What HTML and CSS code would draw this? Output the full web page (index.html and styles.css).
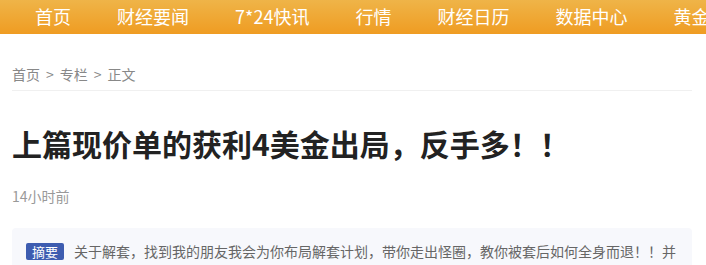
FILE: index.html
```html
<!DOCTYPE html>
<html lang="zh-CN">
<head>
<meta charset="utf-8">
<title>上篇现价单的获利4美金出局，反手多！！</title>
<link rel="stylesheet" href="styles.css">
</head>
<body>
<nav class="topnav">
  <a class="nav-item">首页</a>
  <a class="nav-item">财经要闻</a>
  <a class="nav-item">7*24快讯</a>
  <a class="nav-item">行情</a>
  <a class="nav-item">财经日历</a>
  <a class="nav-item">数据中心</a>
  <a class="nav-item">黄金</a>
  <a class="nav-item">外汇</a>
</nav>
<main class="content">
  <div class="crumbs">
    <a>首页</a><span class="sep">&gt;</span><a>专栏</a><span class="sep">&gt;</span><span>正文</span>
  </div>
  <h1 class="title">上篇现价单的获利4美金出局，反手多！！</h1>
  <div class="meta">14小时前</div>
  <div class="summary">
    <span class="badge">摘要</span>
    <span class="summary-text">关于解套，找到我的朋友我会为你布局解套计划，带你走出怪圈，教你被套后如何全身而退！！并</span>
  </div>
</main>
</body>
</html>
```
FILE: styles.css
```css
html, body {
  margin: 0;
  padding: 0;
  background: #fff;
  overflow: hidden;
}
body {
  font-family: "Noto Sans CJK SC", "Noto Sans", sans-serif;
}
.topnav {
  height: 34px;
  display: flex;
  align-items: center;
  padding-left: 12px;
  background: linear-gradient(to bottom, #efb448, #ef9c22);
  white-space: nowrap;
  overflow: hidden;
}
.nav-item {
  flex: none;
  color: #fff;
  font-size: 18px;
  line-height: 30px;
  padding: 0 23px;
  margin-top: -2px;
}
.content {
  width: 680px;
  margin-left: 12px;
}
.crumbs {
  font-size: 14px;
  color: #888;
  line-height: 20px;
  padding-top: 30px;
  padding-bottom: 6px;
  border-bottom: 1px solid #f0f0f0;
}
.crumbs .sep {
  margin: 0 6px;
}
.title {
  margin: 0;
  padding-top: 30px;
  font-size: 30px;
  line-height: 44px;
  font-weight: bold;
  color: #222;
}
.meta {
  margin-top: 21px;
  font-size: 14px;
  line-height: 20px;
  color: #999;
}
.summary {
  margin-top: 22px;
  background: #f7f8fc;
  border-radius: 4px;
  padding: 12px 14px 12px 14px;
  display: flex;
  align-items: center;
  gap: 10px;
  white-space: nowrap;
  overflow: hidden;
}
.badge {
  flex: none;
  background: #3d5cb0;
  color: #fff;
  font-size: 13px;
  line-height: 17px;
  padding: 0 6px;
  border-radius: 2px;
}
.summary-text {
  font-size: 14px;
  line-height: 22px;
  color: #666;
}
```
